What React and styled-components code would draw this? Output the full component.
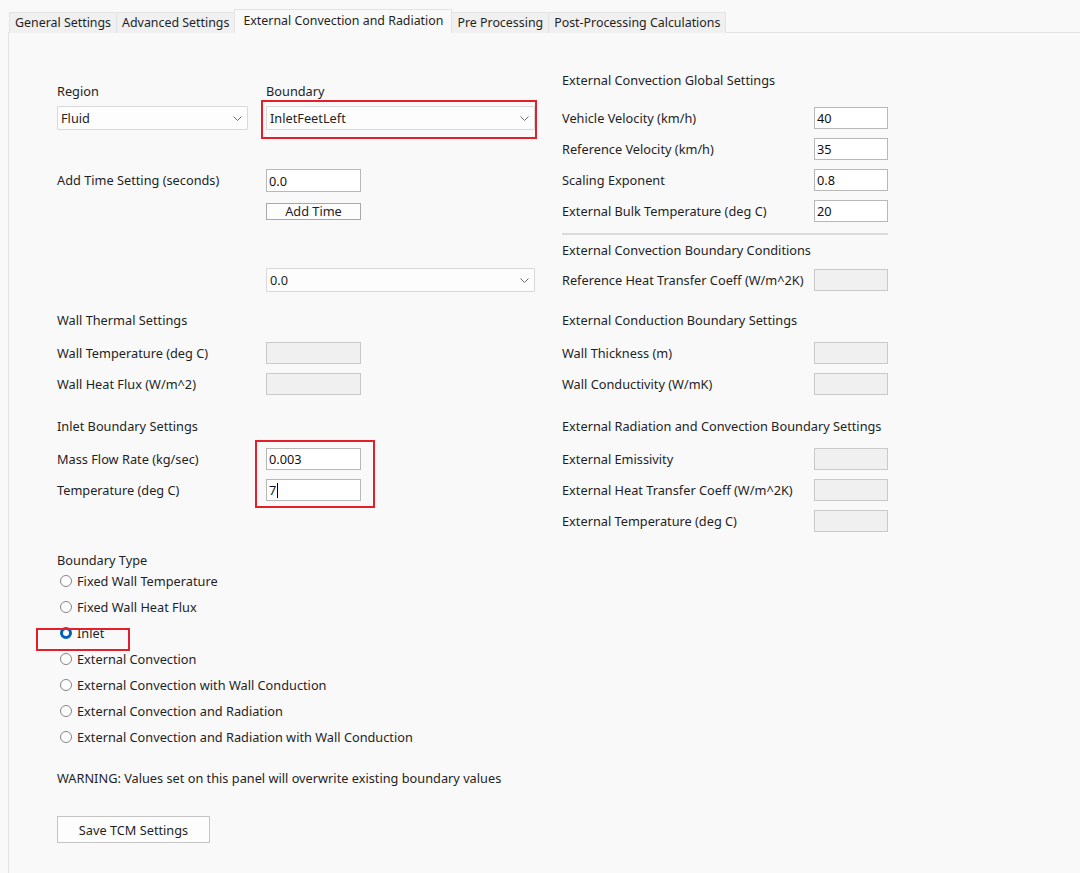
import styled, { createGlobalStyle } from "styled-components";

const GlobalStyle = createGlobalStyle`
  html, body {
    margin: 0;
    padding: 0;
    background: #f9f9f9;
  }
  body {
    font-family: "Noto Sans", "Open Sans", sans-serif;
    font-size: 12.75px;
    color: #1f1f1f;
  }
`;

const Window = styled.div`
  height: 873px;
  box-sizing: border-box;
  padding: 9px 0 0 8px;
  display: flex;
  flex-direction: column;
`;

const TabBar = styled.div`
  display: flex;
  align-items: flex-end;
  height: 24px;
  padding-left: 2px;
  margin-bottom: -1px;
  position: relative;
  z-index: 1;
`;

const Tab = styled.div`
  height: ${(p) => (p.$active ? "24px" : "21px")};
  line-height: ${(p) => (p.$active ? "22px" : "20px")};
  padding: 0 ${(p) => (p.$active ? "8px" : "5px")};
  box-sizing: border-box;
  background: ${(p) => (p.$active ? "#f9f9f9" : "#f0f0f0")};
  border: 1px solid #e3e3e3;
  border-bottom: none;
  margin-left: -1px;
  white-space: nowrap;
  font-size: 12.4px;
  color: #1f1f1f;
`;

const Panel = styled.div`
  flex: 1;
  background: #f9f9f9;
  border-top: 1px solid #e3e3e3;
  border-left: 1px solid #e3e3e3;
  padding: 39px 0 0 48px;
`;

const Columns = styled.div`
  display: flex;
  align-items: flex-start;
  gap: 27px;
`;

const LeftCol = styled.div`
  width: 478px;
  padding-top: 11px;
  display: flex;
  flex-direction: column;
`;

const RightCol = styled.div`
  width: 326px;
  display: flex;
  flex-direction: column;
`;

const TopRow = styled.div`
  display: flex;
  gap: 18px;
`;

const ComboGroup = styled.div`
  width: ${(p) => p.$width}px;
  display: flex;
  flex-direction: column;
`;

const Label = styled.div`
  line-height: 16px;
  white-space: nowrap;
  margin-top: ${(p) => p.$top || 0}px;
`;

const ComboWrap = styled.div`
  position: relative;
  margin-top: ${(p) => p.$top || 0}px;
  margin-left: ${(p) => p.$left || 0}px;
  width: ${(p) => (p.$width ? `${p.$width}px` : "auto")};
`;

const Combo = styled.div`
  height: 24px;
  box-sizing: border-box;
  border: 1px solid #d9d9d9;
  background: #fdfdfd;
  display: flex;
  align-items: center;
  justify-content: space-between;
  padding: 0 5px 0 3px;
  border-radius: 1px;
`;

const Highlight = styled.div`
  position: absolute;
  border: 2px solid #e3202a;
  box-sizing: border-box;
  pointer-events: none;
`;

const TimeRow = styled.div`
  display: flex;
  margin-top: 39px;
`;

const TimeLabel = styled.div`
  width: 209px;
  line-height: 23px;
`;

const Stack = styled.div`
  display: flex;
  flex-direction: column;
`;

const Field = styled.div`
  width: ${(p) => p.$width}px;
  height: ${(p) => p.$height || 22}px;
  box-sizing: border-box;
  border: 1px solid ${(p) => (p.$disabled ? "#c9c9c9" : "#b8b8b8")};
  background: ${(p) => (p.$disabled ? "#f0f0f0" : "#ffffff")};
  padding-left: 2px;
  display: flex;
  align-items: center;
  color: #111;
`;

const Caret = styled.span`
  display: inline-block;
  width: 1px;
  height: 15px;
  background: #000;
  margin-left: 1px;
`;

const SmallButton = styled.div`
  width: 95px;
  height: 17px;
  margin-top: 11px;
  box-sizing: border-box;
  border: 1px solid #a9a9a9;
  background: #fdfdfd;
  text-align: center;
  line-height: 15px;
`;

const Rows = styled.div`
  position: relative;
  display: flex;
  flex-direction: column;
  gap: 9px;
  margin-top: ${(p) => p.$top}px;
`;

const FormRow = styled.div`
  display: flex;
  align-items: center;
  height: 22px;
`;

const RowLabel = styled.div`
  width: ${(p) => p.$width}px;
  white-space: nowrap;
`;

const Separator = styled.div`
  height: 2px;
  background: #dadada;
  margin-top: 11px;
`;

const RadioList = styled.div`
  display: flex;
  flex-direction: column;
`;

const RadioRow = styled.div`
  position: relative;
  height: 26px;
  display: flex;
  align-items: center;
  gap: 5px;
  padding-left: 3px;
`;

const RadioDot = styled.span`
  width: 12px;
  height: 12px;
  box-sizing: border-box;
  border-radius: 50%;
  border: ${(p) => (p.$checked ? "3.5px solid #005fb8" : "1px solid #858585")};
  background: #ffffff;
  flex-shrink: 0;
`;

const Warning = styled.div`
  line-height: 16px;
  margin-top: 20px;
`;

const SaveButton = styled.div`
  width: 153px;
  height: 27px;
  margin-top: 30px;
  box-sizing: border-box;
  border: 1px solid #c4c4c4;
  background: #fdfdfd;
  display: flex;
  align-items: center;
  justify-content: center;
`;

function Chevron() {
  return (
    <svg width="9" height="5" viewBox="0 0 9 5">
      <polyline points="0.5,0.5 4.5,4.5 8.5,0.5" fill="none" stroke="#6b6b6b" strokeWidth="1" />
    </svg>
  );
}

function Dropdown({ value }) {
  return (
    <Combo>
      <span>{value}</span>
      <Chevron />
    </Combo>
  );
}

function Row({ label, labelWidth, fieldWidth, value, disabled, caret }) {
  return (
    <FormRow>
      <RowLabel $width={labelWidth}>{label}</RowLabel>
      <Field $width={fieldWidth} $disabled={disabled}>
        {value}
        {caret && <Caret />}
      </Field>
    </FormRow>
  );
}

const tabs = [
  "General Settings",
  "Advanced Settings",
  "External Convection and Radiation",
  "Pre Processing",
  "Post-Processing Calculations",
];

const boundaryTypes = [
  "Fixed Wall Temperature",
  "Fixed Wall Heat Flux",
  "Inlet",
  "External Convection",
  "External Convection with Wall Conduction",
  "External Convection and Radiation",
  "External Convection and Radiation with Wall Conduction",
];

const L = { labelWidth: 209, fieldWidth: 95 };
const R = { labelWidth: 252, fieldWidth: 74 };

export default function App() {
  return (
    <Window>
      <GlobalStyle />
      <TabBar>
        {tabs.map((t, i) => (
          <Tab key={t} $active={i === 2}>
            {t}
          </Tab>
        ))}
      </TabBar>
      <Panel>
        <Columns>
          <LeftCol>
            <TopRow>
              <ComboGroup $width={191}>
                <Label>Region</Label>
                <ComboWrap $top={7}>
                  <Dropdown value="Fluid" />
                </ComboWrap>
              </ComboGroup>
              <ComboGroup $width={269}>
                <Label>Boundary</Label>
                <ComboWrap $top={7}>
                  <Dropdown value="InletFeetLeft" />
                  <Highlight style={{ top: -6, left: -5, right: -2, bottom: -9 }} />
                </ComboWrap>
              </ComboGroup>
            </TopRow>

            <TimeRow>
              <TimeLabel>Add Time Setting (seconds)</TimeLabel>
              <Stack>
                <Field $width={95} $height={23}>0.0</Field>
                <SmallButton>Add Time</SmallButton>
              </Stack>
            </TimeRow>

            <ComboWrap $top={48} $left={209} $width={269}>
              <Dropdown value="0.0" />
            </ComboWrap>

            <Label $top={20}>Wall Thermal Settings</Label>
            <Rows $top={14}>
              <Row {...L} label="Wall Temperature (deg C)" disabled />
              <Row {...L} label="Wall Heat Flux (W/m^2)" disabled />
            </Rows>

            <Label $top={23}>Inlet Boundary Settings</Label>
            <Rows $top={14}>
              <Row {...L} label="Mass Flow Rate (kg/sec)" value="0.003" />
              <Row {...L} label="Temperature (deg C)" value="7" caret />
              <Highlight style={{ top: -8, left: 198, width: 120, height: 68 }} />
            </Rows>

            <Label $top={51}>Boundary Type</Label>
            <RadioList>
              {boundaryTypes.map((b) => (
                <RadioRow key={b}>
                  <RadioDot $checked={b === "Inlet"} />
                  <span>{b}</span>
                  {b === "Inlet" && (
                    <Highlight style={{ top: 8, left: -21, width: 94, height: 23 }} />
                  )}
                </RadioRow>
              ))}
            </RadioList>

            <Warning>WARNING: Values set on this panel will overwrite existing boundary values</Warning>
            <SaveButton>Save TCM Settings</SaveButton>
          </LeftCol>

          <RightCol>
            <Label>External Convection Global Settings</Label>
            <Rows $top={19}>
              <Row {...R} label="Vehicle Velocity (km/h)" value="40" />
              <Row {...R} label="Reference Velocity (km/h)" value="35" />
              <Row {...R} label="Scaling Exponent" value="0.8" />
              <Row {...R} label="External Bulk Temperature (deg C)" value="20" />
            </Rows>
            <Separator />
            <Label $top={7}>External Convection Boundary Conditions</Label>
            <Rows $top={11}>
              <Row {...R} label="Reference Heat Transfer Coeff (W/m^2K)" disabled />
            </Rows>

            <Label $top={21}>External Conduction Boundary Settings</Label>
            <Rows $top={14}>
              <Row {...R} label="Wall Thickness (m)" disabled />
              <Row {...R} label="Wall Conductivity (W/mK)" disabled />
            </Rows>

            <Label $top={23}>External Radiation and Convection Boundary Settings</Label>
            <Rows $top={14}>
              <Row {...R} label="External Emissivity" disabled />
              <Row {...R} label="External Heat Transfer Coeff (W/m^2K)" disabled />
              <Row {...R} label="External Temperature (deg C)" disabled />
            </Rows>
          </RightCol>
        </Columns>
      </Panel>
    </Window>
  );
}
